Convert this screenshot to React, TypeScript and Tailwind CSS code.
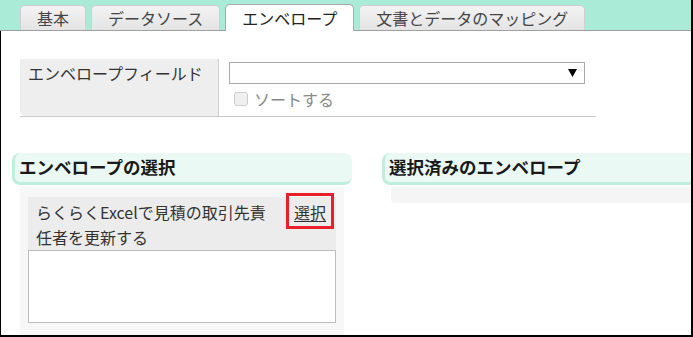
import React from 'react'

const font = { fontFamily: '"Noto Sans CJK JP", "Noto Sans", sans-serif' }

type TabProps = {
  label: string
  active?: boolean
}

const Tab = ({ label, active }: TabProps) =>
  active ? (
    <div className="-mb-px flex h-[27px] items-center rounded-t-[5px] border border-b-0 border-[#a8a8a8] bg-white px-[16px] text-[16px] text-[#222]">
      {label}
    </div>
  ) : (
    <div className="flex h-[25px] items-center rounded-t-[5px] border border-b-0 border-[#d0d0d0] bg-gradient-to-b from-[#f3f3f3] to-[#e4e4e4] px-[16px] text-[16px] text-[#444]">
      {label}
    </div>
  )

const SectionHeader = ({ title }: { title: string }) => (
  <div className="flex h-[32px] items-center rounded-[8px] border-b-[3px] border-l-[3px] border-[#c0eedd] bg-[#eaf9f4] pl-[4px] text-[17.5px] font-bold text-[#1a1a1a]">
    {title}
  </div>
)

const App = () => {
  return (
    <div className="flex h-[337px] w-[693px] flex-col overflow-hidden border-r-2 border-black bg-white" style={font}>
      <div className="flex h-[31px] shrink-0 items-end gap-[5px] border-b border-[#a0a0a0] bg-[#a9ebd6] pl-[20px]">
        <Tab label="基本" />
        <Tab label="データソース" />
        <Tab active label="エンベロープ" />
        <Tab label="文書とデータのマッピング" />
      </div>

      <div className="flex min-h-0 flex-1 flex-col overflow-hidden border-b-2 border-l border-black">
        {/* envelope field */}
        <div className="ml-[19px] mt-[28px] flex h-[58px] w-[576px] shrink-0 border-b border-[#c8c8c8]">
          <div className="w-[199px] rounded-bl-[5px] border-r border-[#cfcfcf] bg-[#eeeeee] pl-[8px] pt-[3px] text-[16px] leading-[22px] text-[#333]">
            エンベロープフィールド
          </div>
          <div className="flex flex-col pl-[10px] pt-[3px]">
            <div className="flex h-[22px] w-[356px] items-center justify-end border border-[#a9a9a9] pr-[7px]">
              <svg width="9" height="8" viewBox="0 0 9 8">
                <polygon points="0,0 9,0 4.5,8" fill="#000" />
              </svg>
            </div>
            <div className="mt-[4px] flex items-center gap-[6px] pl-[5px]">
              <span className="h-[14px] w-[14px] rounded-[3px] border border-[#cccccc] bg-[#f0f0f0]" />
              <span className="text-[16px] leading-[22px] text-[#888]">ソートする</span>
            </div>
          </div>
        </div>

        <div className="mt-[36px] flex min-h-0 flex-1 gap-[30px] pl-[11px]">
          {/* selection */}
          <div className="flex w-[340px] shrink-0 flex-col">
            <SectionHeader title="エンベロープの選択" />
            <div className="mx-[8px] mt-[2px] flex-1 bg-[#f7f7f7] px-[8px] pt-[10px]">
              <div className="flex bg-[#ececec] pl-[8px] pt-[3px] text-[16px] leading-[25px] text-[#333]">
                <div className="flex-1">
                  らくらくExcelで見積の取引先責
                  <br />
                  任者を更新する
                </div>
                <div className="relative mr-[10px] h-fit">
                  <a className="underline underline-offset-2" href="#">
                    選択
                  </a>
                  <span className="absolute -inset-x-[8px] -bottom-[4px] -top-[7px] border-[3px] border-[#e8202a]" />
                </div>
              </div>
              <div className="h-[73px] border border-[#bdbdbd] bg-white" />
            </div>
          </div>

          {/* selected */}
          <div className="flex w-[340px] shrink-0 flex-col">
            <SectionHeader title="選択済みのエンベロープ" />
            <div className="ml-[9px] mt-[2px] h-[16px] rounded-[4px] bg-[#f5f5f5]" />
          </div>
        </div>
      </div>
    </div>
  )
}

export default App
